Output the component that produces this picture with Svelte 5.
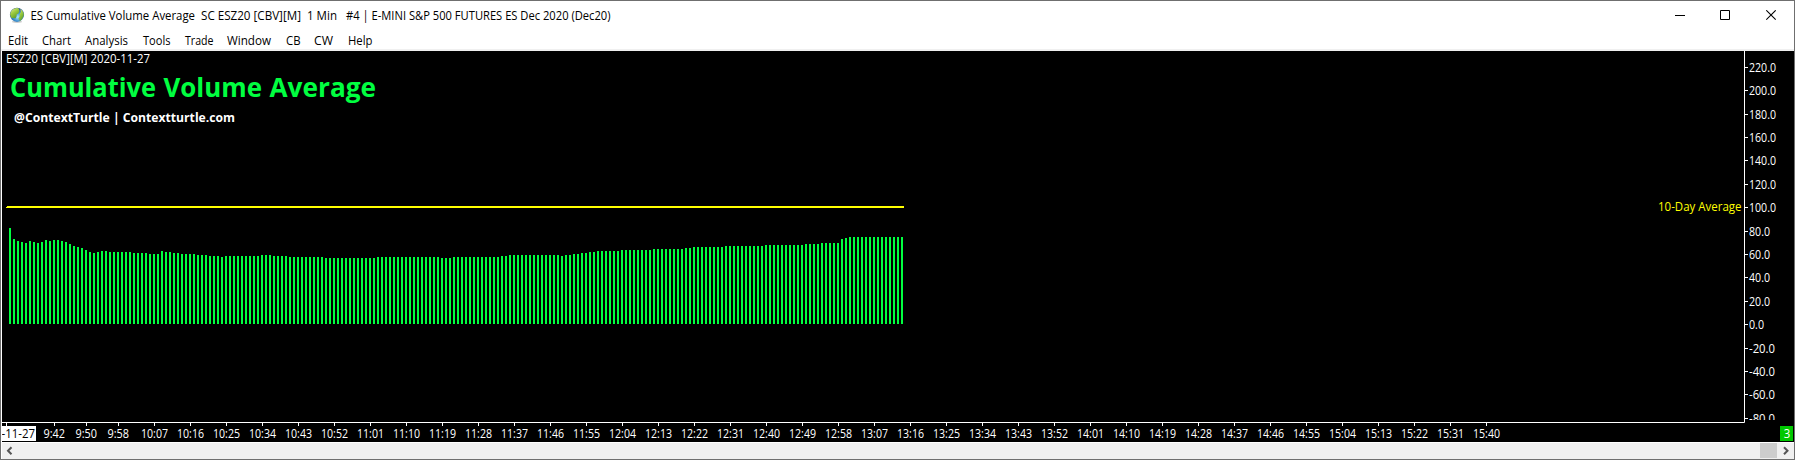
<script>
  // Menu entries: name, text width, slot width up to the next entry
  const menu = [
    ['Edit', 20, 34], ['Chart', 29, 43], ['Analysis', 43, 57.5], ['Tools', 27.5, 42], ['Trade', 28.5, 42.5],
    ['Window', 44, 58.5], ['CB', 14.5, 28.5], ['CW', 19, 33.5], ['Help', 24.5, 30]
  ];

  // Bar heights as [height, repeat] runs, one bar per minute
  const runs = [
    [96, 1], [85, 1], [83, 1], [82, 1], [81, 1], [83, 1], [82, 1], [81, 1], [82, 1], [84, 1],
    [83, 1], [84, 2], [83, 1], [82, 1], [80, 1], [78, 1], [77, 1], [76, 1], [74, 1], [72, 1],
    [71, 1], [72, 1], [73, 2], [72, 6], [71, 4], [70, 3], [73, 1], [72, 2], [71, 2], [70, 4],
    [69, 3], [68, 3], [67, 1], [68, 9], [69, 3], [68, 4], [67, 9], [66, 13], [67, 16], [66, 3],
    [67, 12], [68, 2], [69, 13], [68, 1], [69, 2], [70, 2], [71, 2], [72, 2], [73, 6], [74, 8],
    [75, 8], [76, 2], [77, 8], [78, 10], [79, 10], [80, 4], [81, 5], [85, 1], [86, 1], [87, 14]
  ];
  const bars = runs.flatMap(([h, n]) => Array(n).fill(h));

  const levelY = [67, 90, 114, 137, 160, 184, 207, 231, 254, 277, 301, 324, 348, 371, 394, 418];
  const levels = levelY.map((y, i) => {
    const label = (220 - i * 20).toFixed(1);
    return { y, label, w: { 3: 15, 4: 21, 5: label[0] === '-' ? 26 : 27 }[label.length] };
  });

  const times = [{ x: 54, label: '9:42' }, { x: 86, label: '9:50' }, { x: 118, label: '9:58' }];
  for (let i = 0; i < 38; i++) {
    const m = 607 + i * 9;
    times.push({ x: 154 + i * 36, label: Math.floor(m / 60) + ':' + String(m % 60).padStart(2, '0') });
  }
</script>

{#snippet label(text, x, y, w, cls)}
  <text class={cls} {x} {y} textLength={w} lengthAdjust="spacingAndGlyphs">{text}</text>
{/snippet}

<div class="window">
  <header class="titlebar">
    <svg class="logo" width="16" height="16" viewBox="0 0 16 16">
      <defs>
        <radialGradient id="sea" cx="0.55" cy="0.65" r="0.6">
          <stop offset="0" stop-color="#a8e6ff" />
          <stop offset="0.5" stop-color="#3d92d2" />
          <stop offset="1" stop-color="#2a558c" />
        </radialGradient>
        <linearGradient id="land" x1="0" y1="0" x2="0.6" y2="1">
          <stop offset="0" stop-color="#e2efa0" />
          <stop offset="0.5" stop-color="#9ccb3e" />
          <stop offset="1" stop-color="#5c9a2c" />
        </linearGradient>
      </defs>
      <ellipse cx="8" cy="14.8" rx="5" ry="1.1" fill="#999" opacity="0.5" />
      <circle cx="8" cy="7.8" r="7.1" fill="url(#sea)" />
      <path d="M3 3Q6 .4 9.5 1.2L10.2 3 10.4 4.6 9.4 6.4 7.6 7.4 7.6 9.2 6.4 11.4 4.4 11 2.4 11 1.1 7.5Q1.5 4.5 3 3Z" fill="url(#land)" />
      <path d="M11.4 2Q14.6 4 14.9 8L13.3 11.8 11 13.9 9.5 11.6 10.6 9.4 10.6 7 11.8 5Z" fill="url(#land)" />
    </svg>
    <svg class="caption" width="600" height="26">
      {@render label('ES Cumulative Volume Average', 0.5, 19, 164.5, 'dark')}
      {@render label('SC ESZ20 [CBV][M]', 171, 19, 100, 'dark')}
      {@render label('1 Min', 277, 19, 30, 'dark')}
      {@render label('#4 | E-MINI S&P 500 FUTURES ES Dec 2020 (Dec20)', 316, 19, 264.5, 'dark')}
    </svg>
    <div class="controls">
      <svg class="minimize" width="11" height="11"><path d="M0 5.5H10" /></svg>
      <svg width="11" height="11"><path d="M.5 .5H9.5V9.5H.5Z" /></svg>
      <svg width="11" height="11"><path class="cross" d="M.3 .3L9.7 9.7M9.7 .3L.3 9.7" /></svg>
    </div>
  </header>

  <nav class="menu">
    {#each menu as [name, w, slot]}
      <svg width={slot} height="22">{@render label(name, 1, 18, w, 'dark')}</svg>
    {/each}
  </nav>

  <main class="chart">
    <svg width="1792" height="391" viewBox="2 51 1792 391">
      <defs>
        <clipPath id="scale"><rect x="1745" y="51" width="49" height="369" /></clipPath>
      </defs>

      {@render label('ESZ20 [CBV][M] 2020-11-27', 6, 63, 144, 'light')}
      {@render label('Cumulative', 10, 97, 146, 'heading')}
      {@render label('Volume', 163.5, 97, 98.5, 'heading')}
      {@render label('Average', 269.5, 97, 106.5, 'heading')}
      {@render label('@ContextTurtle | Contextturtle.com', 14, 122, 221, 'credit')}

      <g class="bars">
        {#each bars as h, i}
          <rect x={9 + i * 4} y={324 - h} width="2" height={h} />
        {/each}
      </g>
      <path class="average" d="M7 206H904V208H6V207H7Z" />
      {@render label('10-Day Average', 1658, 211, 83.5, 'yellow')}

      <path class="axis" d="M2 422.5H1744.5V51" />
      <g clip-path="url(#scale)">
        {#each levels as l}
          <path class="axis" d="M1745 {l.y + 0.5}h3" />
          {@render label(l.label, 1749, l.y + 5, l.w, 'light')}
        {/each}
      </g>

      <path class="axis" d="M6.5 423v3" />
      <rect class="datebox" x="2" y="426" width="34" height="15" />
      {@render label('-11-27', 1.5, 438, 33.5, 'dark')}
      {#each times as t}
        <path class="axis" d="M{t.x + 0.5} 423v3" />
        {@render label(t.label, t.x - (t.label.length > 4 ? 13 : 10.5), 438, t.label.length > 4 ? 27 : 21.5, 'light')}
      {/each}

      <rect class="badge" x="1780" y="426" width="13" height="15" />
      {@render label('3', 1783.7, 438, 6.5, 'light')}
    </svg>
  </main>

  <footer class="scrollbar">
    <svg width="16" height="15"><path d="M9.5 4.2L6 7.7L9.5 11.2" /></svg>
    <div class="thumb"></div>
    <svg width="17" height="15"><path d="M7 4.2L10.5 7.7L7 11.2" /></svg>
  </footer>
</div>

<style>
  :global(body) { margin: 0; background: #fff; overflow: hidden; }
  .window {
    box-sizing: border-box;
    width: 1795px;
    height: 460px;
    display: flex;
    flex-direction: column;
    border: 1px solid #6f6f6f;
    background: #fff;
  }
  svg { display: block; flex: none; }
  text { font-family: 'Open Sans', 'Noto Sans', sans-serif; font-size: 12px; white-space: pre; }
  .dark { fill: #000; }
  .light { fill: #fff; }
  .yellow { fill: #ff0; }
  .heading { fill: #00ff40; font-size: 27px; font-weight: 700; }
  .credit { fill: #fff; font-size: 13px; font-weight: 700; }
  .titlebar { height: 26px; display: flex; align-items: flex-start; padding-left: 8px; flex: none; }
  .logo { margin-top: 6px; }
  .caption { margin-left: 5px; overflow: visible; }
  .controls { margin-left: auto; display: flex; gap: 34px; padding: 9px 17px 0 0; }
  .controls svg:last-child { margin-left: 1px; }
  .controls path { fill: none; stroke: #000; stroke-width: 1; }
  .controls .cross { stroke-width: 1.1; }
  .menu {
    height: 22px;
    flex: none;
    display: flex;
    padding-left: 6px;
    border-bottom: 2px solid #f0f0f0;
  }
  .menu svg { overflow: visible; }
  .chart { height: 391px; flex: none; margin-left: 1px; background: #000; }
  .bars { fill: #00ff40; shape-rendering: crispEdges; }
  .average { fill: #ff0; shape-rendering: crispEdges; }
  .axis { fill: none; stroke: #fff; stroke-width: 1; }
  .datebox { fill: #fff; }
  .badge { fill: #00c800; }
  .scrollbar {
    height: 15px;
    flex: none;
    display: flex;
    margin: 1px 0 0 1px;
    border-bottom: 1px solid #f0f0f0;
    background: #f0f0f0;
  }
  .scrollbar path { fill: none; stroke: #555; stroke-width: 2; }
  .thumb { width: 17px; height: 15px; margin-left: auto; background: #cdcdcd; }
</style>
